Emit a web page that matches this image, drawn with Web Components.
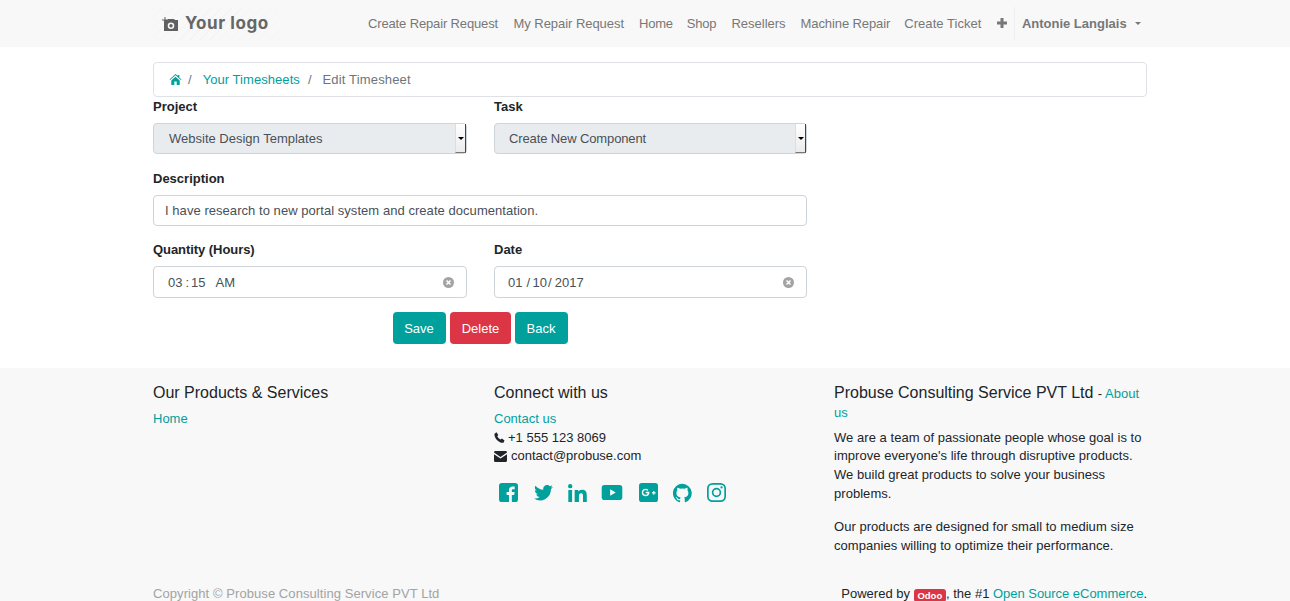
<!DOCTYPE html>
<html lang="en"><head><meta charset="utf-8"><title>Edit Timesheet</title>
<style>
html,body{margin:0;padding:0;height:601px;overflow:hidden;background:#fff;font:13px/19px "Liberation Sans",Arial,sans-serif;color:#212529}
</style></head><body>
<site-nav></site-nav>
<main-area></main-area>
<site-footer></site-footer>
<script>
const define=(name,html)=>customElements.define(name,class extends HTMLElement{constructor(){super();this.attachShadow({mode:'open'}).innerHTML=html}});
define('brand-logo',`<style>:host{display:flex;flex:none;align-items:center;gap:7px;width:125px;height:32px;padding-left:9px;box-sizing:border-box;background:repeating-linear-gradient(135deg,#f8f8f8 0 6px,#f4f4f4 6px 7px);color:#666;font:700 17px/32px Inter,sans-serif;letter-spacing:.55px}svg{width:16px;height:14px;flex:none}span{margin-top:-1px}</style>
<svg viewBox="0 0 16 14"><path fill="#606060" fill-rule="evenodd" d="M2 3h3l1-1h6l1 1h3v11H2zM9 5.500a3.300 3.300 0 1 0 0 6.600 3.300 3.300 0 0 0 0-6.600zm0 1.600a1.700 1.700 0 1 1 0 3.400 1.700 1.700 0 0 1 0-3.400z"/><path stroke="#606060" d="M3 0v5.500M0 3h5.500"/></svg><span>Your logo</span>`);
define('site-nav',`<style>:host{display:block;height:47px;background:#f8f8f8}
.c{width:994px;margin-left:153px;display:flex;align-items:center;height:47px;color:#777}
brand-logo{margin-right:90px}
a{color:#777;white-space:nowrap;flex:none}
.plus{margin:-1px 7px 0 15.400px;width:10px;height:10px;flex:none}
.user{border-left:1px solid #eee;height:33px;line-height:33px;padding:0 7px;font-weight:700;display:flex;flex:none;align-items:center;gap:8px;white-space:nowrap}
.car{border:3.500px solid transparent;border-top-color:#777;border-bottom:0}
</style><div class="c"><brand-logo></brand-logo>
<a style="letter-spacing:-.14px">Create Repair Request</a>
<a style="margin-left:15.500px;letter-spacing:-.05px">My Repair Request</a>
<a style="margin-left:15px;letter-spacing:-.2px">Home</a>
<a style="margin-left:14px;letter-spacing:-.2px">Shop</a>
<a style="margin-left:15px">Resellers</a>
<a style="margin-left:15px;letter-spacing:-.1px">Machine Repair</a>
<a style="margin-left:14px;letter-spacing:.05px">Create Ticket</a>
<svg class="plus" viewBox="0 0 10 10"><path fill="#777" d="M3.500 0h3v3.500H10v3H6.500V10h-3V6.500H0v-3h3.500z"/></svg>
<div class="user">Antonie Langlais <i class="car"></i></div></div>`);
define('bread-crumb',`<style>:host{display:flex;align-items:center;height:35px;box-sizing:border-box;border:1px solid #dee2e6;border-radius:4px;padding:0 15px;color:#6c757d}
a{color:#00a09d;margin-left:11px;letter-spacing:.06px}svg{width:13px;height:11px;display:block}.s{margin-left:6px}.e{margin-left:11px;letter-spacing:.16px}</style>
<svg viewBox="0 0 12 11"><path fill="#00a09d" d="M6 0l2.200 2V1h1.600v2.500L12 5.500l-.6.600L6 1.300.6 6.100 0 5.500zM1.800 6.500L6 2.800l4.200 3.700V11H7.200V7.600H4.800V11h-3z"/></svg>
<span class="s">/</span><a>Your Timesheets</a><span class="s" style="margin-left:8px">/</span><span class="e">Edit Timesheet</span>`);
define('form-field',`<style>:host{display:block}
label{display:block;font-weight:700;color:#212529;height:19px;line-height:19px;margin-bottom:7px}
.box{height:31px;box-sizing:border-box;border:1px solid #ced4da;border-radius:4px;display:flex;align-items:center;color:#495057;position:relative;white-space:pre}
:host([kind=select]) .box{background:#e9ecef;padding-left:var(--pl,15px)}
:host([kind=text]) .box{padding-left:11px;letter-spacing:.05px}
:host([kind=clear]) .box{padding-left:var(--pl,14px);height:32px}
.clear{position:absolute;right:12px;top:10px;width:11px;height:11px;display:none}
:host([kind=clear]) .clear{display:block}
.spin{display:none;position:absolute;right:0;top:0;bottom:0;width:11px;box-sizing:border-box;background:linear-gradient(#fff,#ebebeb);border-right:1px solid #444;border-bottom:1px solid #777;border-left:1px solid #ddd;align-items:center;justify-content:center}
:host([kind=select]) .spin{display:flex}
.spin i{border:3px solid transparent;border-top-color:#000;border-bottom:0}
</style><label><slot name="label"></slot></label><div class="box"><slot></slot>
<svg class="clear" viewBox="0 0 11 11"><circle cx="5.500" cy="5.500" r="5.500" fill="#a3a3a3"/><path d="M3.500 3.500l4 4M7.500 3.500l-4 4" stroke="#fff" stroke-width="1.500"/></svg><span class="spin"><i></i></span></div>`);
define('action-button',`<style>:host{display:flex;align-items:center;justify-content:center;height:32px;border-radius:4px;background:var(--bg,#00a09d);color:#fff;box-sizing:border-box}</style><slot></slot>`);
define('main-area',`<style>:host{display:block;height:321px;padding-top:15px;box-sizing:border-box}
.c{width:994px;margin-left:153px}
.g{display:grid;grid-template-columns:314px 313px;column-gap:27px;width:654px}
.d{margin-top:15px}.q{margin-top:14px}.wide{grid-column:1/3}
.b{display:flex;gap:4px;margin:14px 0 0 240px}
</style><div class="c"><bread-crumb></bread-crumb>
<div class="g">
<form-field kind="select"><span slot="label">Project</span>Website Design Templates</form-field>
<form-field kind="select" style="--pl:14px"><span slot="label">Task</span><span style="letter-spacing:-.12px">Create New Component</span></form-field>
<form-field kind="text" class="wide d"><span slot="label">Description</span>I have research to new portal system and create documentation.</form-field>
<form-field kind="clear" class="q"><span slot="label" style="letter-spacing:-.06px">Quantity (Hours)</span><span>03</span><span style="margin-left:3px">:</span><span style="margin-left:2px">15</span><span style="margin-left:10px">AM</span></form-field>
<form-field kind="clear" class="q" style="--pl:13px"><span slot="label">Date</span><span>01</span><span style="margin-left:4px">/</span><span style="margin-left:2.500px">10</span><span style="margin-left:1px">/</span><span style="margin-left:3px">2017</span></form-field>
</div>
<div class="b"><action-button style="width:53px;padding-right:1px">Save</action-button><action-button style="--bg:#dc3545;width:61px">Delete</action-button><action-button style="width:53px;padding-right:1px">Back</action-button></div>
</div>`);
define('site-footer',`<style>:host{display:block;height:233px;background:#f8f8f8;color:#212529;overflow:hidden;line-height:18.57px}
.c{width:994px;margin-left:153px;height:233px}
.g{display:grid;grid-template-columns:341px 340px 313px;padding-top:15px;height:204px;box-sizing:border-box}
h5{font-size:16px;font-weight:400;margin:0;line-height:19px;display:block}
a{color:#00a09d}
.sub{font-size:13px}.l{margin-top:8px}
.ic{display:flex;gap:15px;margin:17px 0 0 5px;align-items:center;height:20px}
.ic svg{display:block;fill:#00a09d;flex:none}
.line{display:flex;align-items:center;gap:3px}
.line svg{width:11px;height:11px;fill:#212529}
p{margin:0}
.bot{display:flex;justify-content:space-between;padding-top:13px;height:29px;box-sizing:border-box;color:#212529;white-space:nowrap}
.cp{color:#a3a3a3;letter-spacing:.07px}
.bd{display:inline-block;background:#dc3545;color:#fff;font-size:9.500px;font-weight:700;line-height:13px;padding:0 3.800px;border-radius:3px;vertical-align:-1px}
</style><div class="c"><div class="g">
<div><h5>Our Products &amp; Services</h5><div class="l"><a>Home</a></div></div>
<div><h5>Connect with us</h5><div class="l"><a>Contact us</a></div>
<div class="line"><svg viewBox="0 0 11 11"><path d="M2.500.200l1.800 2.800-1 1.200c.6 1.400 2 2.800 3.400 3.400l1.200-1 2.600 1.800-1 2.400c-4.400.4-9.500-4.500-9-9z"/></svg>+1 555 123 8069</div>
<div class="line" style="gap:4px"><svg viewBox="0 0 13 11" style="width:13px"><path d="M0 1.500C0 .7.600 0 1.300 0h10.400c.7 0 1.300.7 1.300 1.500L6.500 6zM0 3.200l6.500 4.300L13 3.200v6.300c0 .8-.6 1.500-1.300 1.500H1.300C.6 11 0 10.300 0 9.500z"/></svg>contact@probuse.com</div>
<div class="ic">
<svg viewBox="0 0 20 20" width="19" height="19"><path fill-rule="evenodd" d="M3 0h14a3 3 0 0 1 3 3v14a3 3 0 0 1-3 3h-3.500v-7.500H16l.4-3h-2.900V8c0-.9.300-1.400 1.500-1.400h1.500V3.900c-.3 0-1.200-.1-2.200-.1-2.300 0-3.800 1.400-3.800 3.900v1.800H8v3h2.500V20H3a3 3 0 0 1-3-3V3a3 3 0 0 1 3-3z"/></svg>
<svg viewBox="0 0 20 17" width="19" height="16" style="margin-left:1px"><path d="M20 2c-.7.300-1.500.5-2.400.6.900-.5 1.500-1.300 1.800-2.300-.8.500-1.700.8-2.600 1A4.100 4.100 0 0 0 9.800 5C6.400 4.800 3.400 3.200 1.400.7.300 2.600.900 5 2.700 6.200c-.7 0-1.300-.2-1.900-.5 0 2 1.400 3.700 3.300 4.100-.6.200-1.200.2-1.900.1.500 1.600 2 2.800 3.800 2.800A8.300 8.300 0 0 1 0 14.400 11.600 11.600 0 0 0 17.900 4.200C18.700 3.700 19.400 2.900 20 2z"/></svg>
<svg viewBox="0 0 20 19" width="19" height="18"><path d="M.3 6.300h4V19h-4zM2.300 0a2.300 2.300 0 1 1 0 4.600 2.300 2.300 0 0 1 0-4.600zM7 6.300h3.800V8c.6-1 2-2 4-2 4.200 0 5 2.700 5 6.300V19h-4v-6c0-1.400 0-3.300-2-3.300s-2.300 1.600-2.300 3.200V19H7z"/></svg>
<svg viewBox="0 0 22 16" width="22" height="15" style="margin-left:-1px;margin-right:1px"><path fill-rule="evenodd" d="M3 0h16a3 3 0 0 1 3 3v10a3 3 0 0 1-3 3H3a3 3 0 0 1-3-3V3a3 3 0 0 1 3-3zm6 4.500v7L15 8z"/></svg>
<svg viewBox="0 0 20 20" width="19" height="19"><path fill-rule="evenodd" d="M3 0h14a3 3 0 0 1 3 3v14a3 3 0 0 1-3 3H3a3 3 0 0 1-3-3V3a3 3 0 0 1 3-3zm4 6a4 4 0 1 0 3.900 4.800l.1-1.600H7v1.500h2.200A2.400 2.400 0 1 1 8.700 8.300l1.100-1.100A4 4 0 0 0 7 6zm8 2.500v1.300h-1.300V11H15v1.300h1.200V11h1.300V9.800h-1.300V8.500z"/></svg>
<svg viewBox="0 0 20 20" width="19" height="20"><path d="M10 .3A10 10 0 0 0 6.800 19.800c.5.100.7-.2.700-.5v-1.700c-2.800.6-3.400-1.300-3.400-1.300-.5-1.200-1.100-1.500-1.100-1.500-.9-.6.100-.6.100-.6 1 .1 1.500 1 1.500 1 .9 1.500 2.300 1.100 2.900.8.100-.6.300-1.100.6-1.300-2.200-.3-4.500-1.100-4.500-4.900 0-1.100.4-2 1-2.700-.1-.2-.4-1.300.1-2.600 0 0 .8-.3 2.700 1a9.400 9.400 0 0 1 5 0c1.900-1.300 2.700-1 2.700-1 .5 1.300.2 2.400.1 2.600.6.700 1 1.600 1 2.700 0 3.800-2.300 4.600-4.500 4.900.4.300.7.900.7 1.800v2.700c0 .3.200.6.700.5A10 10 0 0 0 10 .3z"/></svg>
<svg viewBox="0 0 20 20" width="19" height="19"><path fill-rule="evenodd" d="M5.800 0h8.400A5.800 5.800 0 0 1 20 5.800v8.400a5.800 5.800 0 0 1-5.800 5.800H5.800A5.800 5.800 0 0 1 0 14.200V5.800A5.800 5.800 0 0 1 5.800 0zm0 1.800a4 4 0 0 0-4 4v8.400a4 4 0 0 0 4 4h8.400a4 4 0 0 0 4-4V5.800a4 4 0 0 0-4-4zM10 5a5 5 0 1 1 0 10 5 5 0 0 1 0-10zm0 1.800a3.200 3.200 0 1 0 0 6.400 3.200 3.200 0 0 0 0-6.400zM15.300 3.500a1.200 1.200 0 1 1 0 2.400 1.200 1.200 0 0 1 0-2.400z"/></svg>
</div></div>
<div><h5 style="line-height:18.6px;padding-top:.5px">Probuse Consulting Service PVT Ltd <span class="sub">- <a>About</a><br><a>us</a></span></h5>
<p style="margin-top:6.200px;letter-spacing:.04px">We are a team of passionate people whose goal is to improve everyone's life through disruptive products. We build great products to solve your business problems.</p>
<p style="margin-top:15.100px;letter-spacing:.04px">Our products are designed for small to medium size companies willing to optimize their performance.</p></div>
</div>
<div class="bot"><span class="cp">Copyright © Probuse Consulting Service PVT Ltd</span><span>Powered by <span class="bd">Odoo</span>, the #1 <a style="letter-spacing:-.03px">Open Source eCommerce</a>.</span></div>
</div>`);
</script></body></html>
